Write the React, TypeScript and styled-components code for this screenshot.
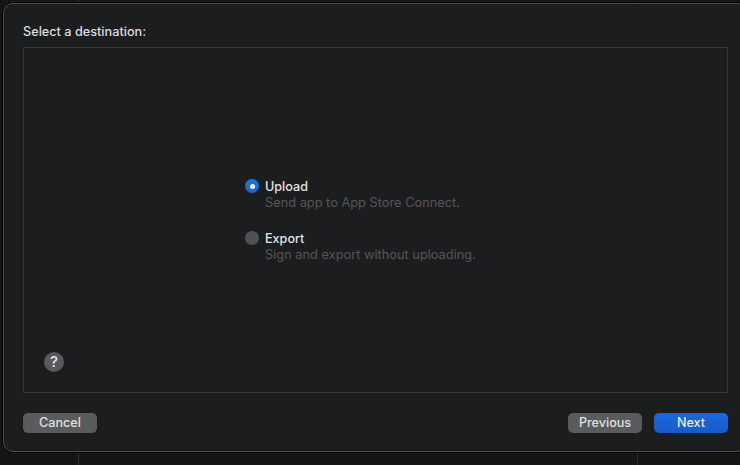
import React from 'react'
import styled, { createGlobalStyle } from 'styled-components'

const GlobalStyle = createGlobalStyle`
  html, body {
    margin: 0;
    width: 740px;
    height: 465px;
    overflow: hidden;
    background-color: #141517;
    background-image:
      linear-gradient(#2a2b2d, #2a2b2d),
      linear-gradient(#2a2b2d, #2a2b2d);
    background-size: 1px 100%;
    background-position: 78px 0, 637px 0;
    background-repeat: no-repeat;
    font-family: Inter, 'Liberation Sans', sans-serif;
  }
`

const Sheet = styled.div`
  box-sizing: border-box;
  width: 745px;
  height: 449px;
  margin: 3px 0 0 3px;
  padding: 20px 25px 18px 19px;
  display: flex;
  flex-direction: column;
  background: #1c1d1f;
  border: 1px solid #4a4b4d;
  border-radius: 10px;
  box-shadow: 0 0 0 1px #000;
`

const Title = styled.h1`
  margin: 0 0 7px;
  font-size: 12.7px;
  line-height: 16px;
  font-weight: 450;
  color: #dcdcdd;
`

const Panel = styled.div`
  box-sizing: border-box;
  width: 705px;
  height: 346px;
  padding: 131px 0 20px 20px;
  display: flex;
  flex-direction: column;
  border: 1px solid #363739;
`

const Options = styled.div`
  display: flex;
  flex-direction: column;
  gap: 20px;
  margin-left: 201px;
`

const Option = styled.div`
  display: flex;
  gap: 6px;
`

const Radio = styled.span<{ $checked?: boolean }>`
  flex: none;
  width: 14px;
  height: 14px;
  border-radius: 50%;
  display: flex;
  align-items: center;
  justify-content: center;
  background: ${(p) =>
    p.$checked ? 'linear-gradient(#1f74e0, #1766cf)' : '#505153'};
  &::after {
    content: '';
    display: ${(p) => (p.$checked ? 'block' : 'none')};
    width: 5px;
    height: 5px;
    border-radius: 50%;
    background: #f4f7fb;
  }
`

const OptionText = styled.div`
  display: flex;
  flex-direction: column;
`

const OptionLabel = styled.span`
  font-size: 12.6px;
  line-height: 16px;
  font-weight: 450;
  color: #e2e2e3;
`

const OptionHint = styled.span`
  font-size: 12.8px;
  line-height: 16px;
  color: #555557;
`

const HelpButton = styled.button`
  margin-top: auto;
  width: 20px;
  height: 20px;
  padding: 0;
  border: none;
  border-radius: 50%;
  background: #58595b;
  color: #e4e4e5;
  font-family: inherit;
  font-size: 15px;
  font-weight: 500;
  line-height: 20px;
  text-align: center;
`

const Footer = styled.div`
  display: flex;
  align-items: center;
  width: 705px;
  margin-top: 20px;
`

const Button = styled.button<{ $primary?: boolean }>`
  width: 74px;
  height: 20px;
  padding: 0;
  border: none;
  border-radius: 5px;
  background: ${(p) =>
    p.$primary ? 'linear-gradient(#1b68dc, #175bcb)' : '#5a5b5c'};
  color: ${(p) => (p.$primary ? '#e6edf9' : '#e0e0e0')};
  font-family: inherit;
  font-size: 12.6px;
  font-weight: 450;
  line-height: 20px;
  text-align: center;
`

const Spacer = styled.div`
  flex: 1;
`

const NextButton = styled(Button)`
  margin-left: 12px;
`

export default function App() {
  return (
    <>
      <GlobalStyle />
      <Sheet>
        <Title>Select a destination:</Title>
        <Panel>
          <Options>
            <Option>
              <Radio $checked />
              <OptionText>
                <OptionLabel>Upload</OptionLabel>
                <OptionHint>Send app to App Store Connect.</OptionHint>
              </OptionText>
            </Option>
            <Option>
              <Radio />
              <OptionText>
                <OptionLabel>Export</OptionLabel>
                <OptionHint>Sign and export without uploading.</OptionHint>
              </OptionText>
            </Option>
          </Options>
          <HelpButton>?</HelpButton>
        </Panel>
        <Footer>
          <Button>Cancel</Button>
          <Spacer />
          <Button>Previous</Button>
          <NextButton $primary>Next</NextButton>
        </Footer>
      </Sheet>
    </>
  )
}
